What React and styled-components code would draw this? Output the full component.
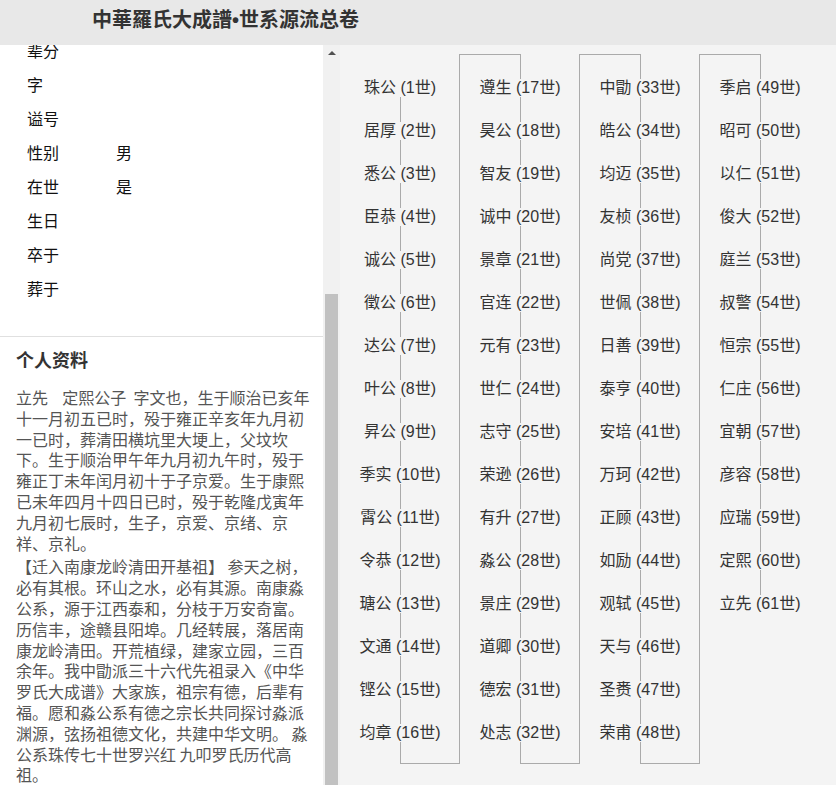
import React from 'react';
import styled, {createGlobalStyle} from 'styled-components';

const GlobalStyle = createGlobalStyle`
  *, *::before, *::after {
    box-sizing: border-box;
  }
  html, body {
    margin: 0;
    padding: 0;
    background: #fff;
    font-family: "Noto Sans CJK SC", "Noto Sans", sans-serif;
  }
`;

const Page = styled.div`
  width: 836px;
  height: 785px;
  display: flex;
  flex-direction: column;
  overflow: hidden;
`;

const Header = styled.header`
  height: 45px;
  flex-shrink: 0;
  background: #e8e8e8;
  display: flex;
  align-items: center;
  padding-left: 92px;
`;

const Title = styled.h1`
  margin: 0;
  font-size: 20px;
  line-height: 24px;
  font-weight: bold;
  color: #333;
  padding-bottom: 6px;
`;

const Dot = styled.span`
  font-family: "Liberation Sans", sans-serif;
`;

const Main = styled.div`
  flex: 1;
  display: flex;
  min-height: 0;
`;

const LeftPanel = styled.aside`
  width: 323px;
  flex-shrink: 0;
  background: #fff;
  overflow: hidden;
`;

const InfoList = styled.div`
  margin-top: -12px;
  padding: 0 0 31px 27px;
`;

const InfoRow = styled.div`
  display: flex;
  height: 34px;
  align-items: center;
  font-size: 16px;
  color: #111;
`;

const InfoLabel = styled.span`
  width: 89px;
`;

const Profile = styled.section`
  border-top: 1px solid #e0e0e0;
  padding: 10px 0 0 16px;
`;

const ProfileTitle = styled.h2`
  margin: 0 0 16px;
  font-size: 18px;
  line-height: 24px;
  font-weight: bold;
  color: #333;
`;

const ProfileText = styled.p`
  margin: ${p => (p.$next ? '3px 0 0' : '0')};
  width: 300px;
  font-size: 16px;
  line-height: 1.3;
  color: #555;
`;

const ScrollTrack = styled.div`
  width: 17px;
  flex-shrink: 0;
  background: #f1f1f1;
  display: flex;
  flex-direction: column;
  align-items: stretch;
`;

const ScrollArrow = styled.div`
  margin: 6px auto 0;
  width: 0;
  height: 0;
  border-left: 4px solid transparent;
  border-right: 4px solid transparent;
  border-bottom: 4px solid #505050;
`;

const ScrollThumb = styled.div`
  margin: 239px 2px 0;
  flex: 1;
  background: #c1c1c1;
`;

const RightPanel = styled.main`
  flex: 1;
  background: #f4f4f4;
  padding-top: 9px;
  display: flex;
  align-items: flex-start;
`;

const Lineage = styled.div`
  display: flex;
  align-items: stretch;
`;

const Column = styled.div`
  position: relative;
  width: 120px;
  padding: 12px 0 10px;
  display: flex;
  flex-direction: column;

  &::before {
    content: '';
    position: absolute;
    left: 60px;
    width: 60px;
    top: ${p => (p.$first ? '33px' : '0')};
    ${p => (p.$last ? `height: ${p.$lineEnd}px;` : 'bottom: 0;')}
    border-left: 1px solid #aaa;
    border-bottom: ${p => (p.$last ? 'none' : '1px solid #aaa')};
  }

  &::after {
    content: '';
    display: ${p => (p.$first ? 'none' : 'block')};
    position: absolute;
    left: -1px;
    top: 0;
    bottom: 0;
    width: 61px;
    border-left: 1px solid #aaa;
    border-top: 1px solid #aaa;
  }
`;

const Person = styled.div`
  height: 43px;
  display: flex;
  align-items: center;
  justify-content: center;
`;

const PersonName = styled.span`
  position: relative;
  z-index: 1;
  background: #f4f4f4;
  font-family: "Liberation Sans", "Noto Sans CJK SC", sans-serif;
  font-size: 16px;
  line-height: 18px;
  color: #333;
  white-space: nowrap;
`;

const info = [
  ['辈分', ''],
  ['字', ''],
  ['谥号', ''],
  ['性别', '男'],
  ['在世', '是'],
  ['生日', ''],
  ['卒于', ''],
  ['葬于', ''],
];

const names = [
  '珠公', '居厚', '悉公', '臣恭', '诚公', '徵公', '达公', '叶公',
  '昇公', '季实', '霄公', '令恭', '瑭公', '文通', '铿公', '均章',
  '遵生', '昊公', '智友', '诚中', '景章', '官连', '元有', '世仁',
  '志守', '荣逊', '有升', '淼公', '景庄', '道卿', '德宏', '处志',
  '中勖', '皓公', '均迈', '友桢', '尚党', '世佩', '日善', '泰亨',
  '安培', '万珂', '正顾', '如励', '观轼', '天与', '圣赉', '荣甫',
  '季启', '昭可', '以仁', '俊大', '庭兰', '叔警', '恒宗', '仁庄',
  '宜朝', '彦容', '应瑞', '定熙', '立先',
];

const columns = [];
for (let i = 0; i < names.length; i += 16) {
  columns.push(names.slice(i, i + 16).map((n, j) => ({name: n, gen: i + j + 1})));
}

export default function App() {
  return (
    <Page>
      <GlobalStyle />
      <Header>
        <Title>中華羅氏大成譜<Dot>•</Dot>世系源流总卷</Title>
      </Header>
      <Main>
        <LeftPanel>
          <InfoList>
            {info.map(([label, value]) => (
              <InfoRow key={label}>
                <InfoLabel>{label}</InfoLabel>
                <span>{value}</span>
              </InfoRow>
            ))}
          </InfoList>
          <Profile>
            <ProfileTitle>个人资料</ProfileTitle>
            <ProfileText>
              立先{'\u00a0\u00a0\u00a0\u00a0'}定熙公子{'\u00a0\u00a0'}字文也，生于顺治已亥年十一月初五已时，殁于雍正辛亥年九月初一已时，葬清田横坑里大埂上，父坟坎下。生于顺治甲午年九月初九午时，殁于雍正丁未年闰月初十于子京爱。生于康熙已未年四月十四日已时，殁于乾隆戊寅年九月初七辰时，生子，京爱、京绪、京祥、京礼。
            </ProfileText>
            <ProfileText $next>
              【迁入南康龙岭清田开基祖】 参天之树，必有其根。环山之水，必有其源。南康淼公系，源于江西泰和，分枝于万安奇富。历信丰，途赣县阳埠。几经转展，落居南康龙岭清田。开荒植绿，建家立园，三百余年。我中勖派三十六代先祖录入《中华罗氏大成谱》大家族，祖宗有德，后辈有福。愿和淼公系有德之宗长共同探讨淼派渊源，弦扬祖德文化，共建中华文明。 淼公系珠传七十世罗兴红 九叩罗氏历代高祖。
            </ProfileText>
          </Profile>
        </LeftPanel>
        <ScrollTrack>
          <ScrollArrow />
          <ScrollThumb />
        </ScrollTrack>
        <RightPanel>
          <Lineage>
            {columns.map((col, ci) => (
              <Column
                key={ci}
                $first={ci === 0}
                $last={ci === columns.length - 1}
                $lineEnd={12 + (col.length - 1) * 43 + 21}
              >
                {col.map(p => (
                  <Person key={p.gen}>
                    <PersonName>{p.name} ({p.gen}世)</PersonName>
                  </Person>
                ))}
              </Column>
            ))}
          </Lineage>
        </RightPanel>
      </Main>
    </Page>
  );
}
